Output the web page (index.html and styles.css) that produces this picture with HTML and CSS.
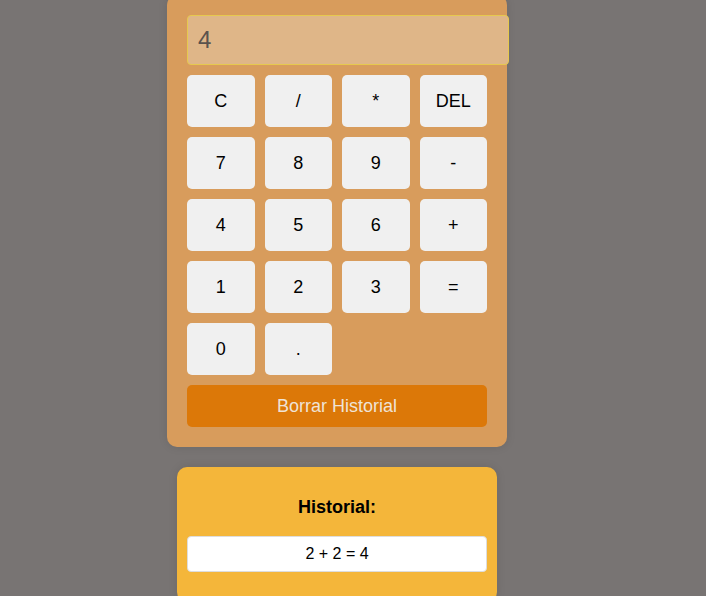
FILE: index.html
```html
<!DOCTYPE html>
<html lang="es">
<head>
<meta charset="utf-8">
<title>Calculadora</title>
<link rel="stylesheet" href="styles.css">
</head>
<body>
  <div class="calculator">
    <input class="display" type="text" value="4" readonly>
    <div class="keys">
      <button class="key">C</button>
      <button class="key">/</button>
      <button class="key">*</button>
      <button class="key">DEL</button>
      <button class="key">7</button>
      <button class="key">8</button>
      <button class="key">9</button>
      <button class="key">-</button>
      <button class="key">4</button>
      <button class="key">5</button>
      <button class="key">6</button>
      <button class="key">+</button>
      <button class="key">1</button>
      <button class="key">2</button>
      <button class="key">3</button>
      <button class="key">=</button>
      <button class="key">0</button>
      <button class="key">.</button>
    </div>
    <button class="clear-history">Borrar Historial</button>
  </div>
  <div class="history">
    <h3 class="history-title">Historial:</h3>
    <div class="history-item">2 + 2 = 4</div>
  </div>
</body>
</html>
```
FILE: styles.css
```css
html, body {
  margin: 0;
  padding: 0;
}
body {
  background: #787473;
  font-family: "Liberation Sans", Arial, sans-serif;
  display: flex;
  flex-direction: column;
  align-items: center;
  padding-right: 32px;
}
.calculator {
  margin-top: -5px;
  width: 300px;
  padding: 20px;
  background: #d89c5c;
  border-radius: 10px;
  box-shadow: 0 0 10px rgba(0, 0, 0, 0.1);
}
.display {
  display: block;
  width: 300px;
  margin: 0 0 10px 0;
  padding: 10px;
  font-family: "Liberation Sans", Arial, sans-serif;
  font-size: 24px;
  line-height: 28px;
  color: #5a534d;
  background: #dfb688;
  border: 1px solid #e6c84e;
  border-radius: 4px;
  outline: none;
}
.keys {
  display: grid;
  grid-template-columns: repeat(4, 1fr);
  gap: 10px;
}
.key {
  height: 52px;
  font-family: "Liberation Sans", Arial, sans-serif;
  font-size: 18px;
  color: #000;
  background: #f0f0f0;
  border: none;
  border-radius: 5px;
  padding: 0;
}
.clear-history {
  display: block;
  width: 100%;
  height: 42px;
  margin-top: 10px;
  font-family: "Liberation Sans", Arial, sans-serif;
  font-size: 18px;
  color: #efe3d6;
  background: #dc7808;
  border: none;
  border-radius: 5px;
}
.history {
  margin-top: 20px;
  width: 300px;
  padding: 10px 10px 30px;
  background: #f4b63a;
  border-radius: 10px;
  box-shadow: 0 0 10px rgba(0, 0, 0, 0.1);
}
.history-title {
  margin: 20px 0 18px;
  font-size: 18px;
  line-height: 21px;
  text-align: center;
  color: #000;
}
.history-item {
  background: #fff;
  border: 1px solid #ddd;
  border-radius: 4px;
  padding: 8px;
  font-size: 16px;
  line-height: 18px;
  text-align: center;
  color: #000;
}
```
